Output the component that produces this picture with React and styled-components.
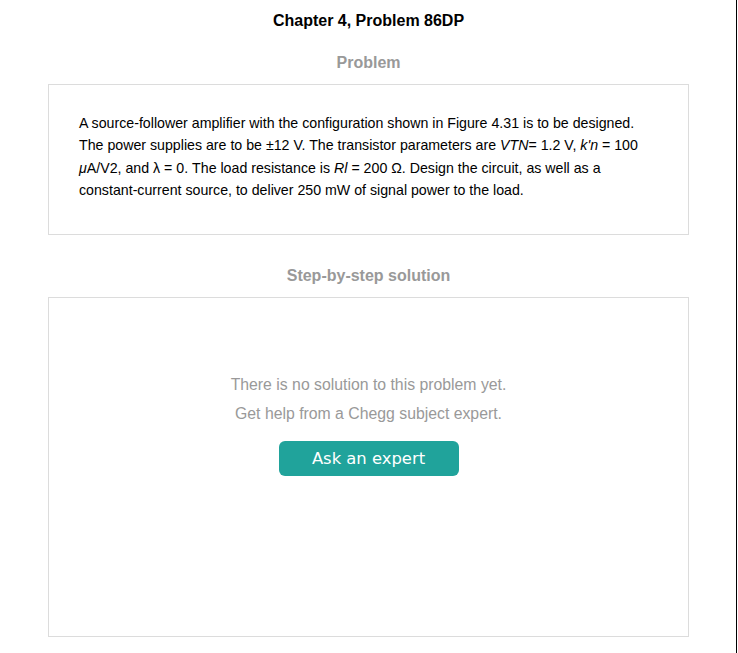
import React from "react";
import styled, { createGlobalStyle } from "styled-components";

const Global = createGlobalStyle`
  html, body { margin: 0; padding: 0; background: #fff; }
  body { font-family: "Liberation Sans", Arial, sans-serif; }
`;

const Page = styled.div`
  width: 737px;
  min-height: 653px;
  box-sizing: border-box;
  border-right: 1px solid #000;
  padding: 11px 0 0 48px;
`;

const Column = styled.div`
  width: 641px;
  display: flex;
  flex-direction: column;
`;

const Title = styled.h1`
  margin: 0;
  font-size: 16px;
  line-height: 20px;
  font-weight: bold;
  color: #000;
  text-align: center;
`;

const SectionHeading = styled.h2`
  margin: ${(p) => p.$top}px 0 ${(p) => p.$bottom}px;
  font-size: 16px;
  line-height: 20px;
  font-weight: bold;
  color: #999;
  text-align: center;
`;

const Card = styled.div`
  box-sizing: border-box;
  border: 1px solid #dcdcdc;
  height: ${(p) => p.$height}px;
  padding: ${(p) => p.$padding};
  display: flex;
  flex-direction: column;
  align-items: ${(p) => (p.$center ? "center" : "stretch")};
`;

const Paragraph = styled.p`
  margin: 0;
  font-size: 14.2px;
  line-height: 22.4px;
  color: #000;
`;

const Muted = styled.p`
  margin: 0;
  font-size: 15.8px;
  line-height: 29px;
  color: #999;
  text-align: center;
`;

const ExpertButton = styled.button`
  margin-top: 13px;
  width: 180px;
  height: 35px;
  border: none;
  border-radius: 6px;
  background: #20a39b;
  color: #fff;
  font-family: "DejaVu Sans", Tahoma, sans-serif;
  font-size: 16.4px;
  padding: 0;
  cursor: pointer;
`;

export default function App() {
  return (
    <>
      <Global />
      <Page>
        <Column>
          <Title>Chapter 4, Problem 86DP</Title>
          <SectionHeading $top={22} $bottom={11}>Problem</SectionHeading>
          <Card $height={151} $padding="27px 29px 0 30px">
            <Paragraph>
              A source-follower amplifier with the configuration shown in Figure 4.31 is to be designed.
              The power supplies are to be ±12 V. The transistor parameters are <i>VTN</i>= 1.2 V,{" "}
              <i>k'n</i> = 100 <i>μ</i>A/V2, and λ = 0. The load resistance is <i>Rl</i> = 200 Ω. Design
              the circuit, as well as a constant-current source, to deliver 250 mW of signal power to
              the load.
            </Paragraph>
          </Card>
          <SectionHeading $top={31} $bottom={11}>Step-by-step solution</SectionHeading>
          <Card $height={340} $padding="72px 20px 0" $center>
            <Muted>There is no solution to this problem yet.</Muted>
            <Muted>Get help from a Chegg subject expert.</Muted>
            <ExpertButton>Ask an expert</ExpertButton>
          </Card>
        </Column>
      </Page>
    </>
  );
}
